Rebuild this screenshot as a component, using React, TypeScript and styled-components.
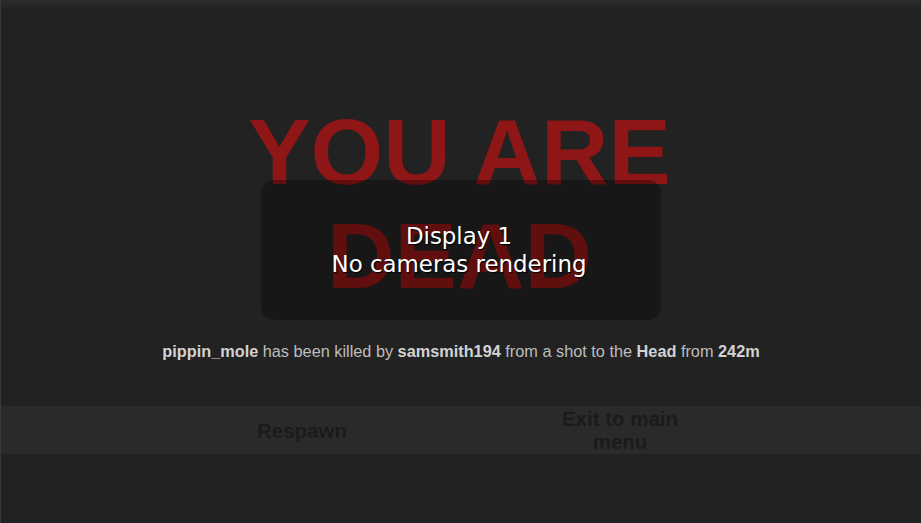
import React from "react";
import styled, { createGlobalStyle } from "styled-components";

const Global = createGlobalStyle`
  html, body { margin: 0; padding: 0; background: #222222; }
  * { box-sizing: border-box; }
`;

const Screen = styled.div`
  position: relative;
  width: 921px;
  height: 523px;
  background: #222222;
  border-left: 1px solid #3a3a3a;
  display: flex;
  flex-direction: column;
  align-items: stretch;
  overflow: hidden;
  font-family: "Liberation Sans", Arial, sans-serif;
`;

const TopStrip = styled.div`
  height: 7px;
  flex: none;
  background: linear-gradient(#2b2b2b, #272727);
  border-bottom: 1px solid #262626;
`;

const Title = styled.h1`
  margin: 93px 0 0;
  font-family: "Liberation Sans", Arial, sans-serif;
  font-weight: 700;
  font-size: 93.5px;
  line-height: 104px;
  color: #8e1616;
  text-align: center;
  padding-right: 3px;
`;

const KillMessage = styled.p`
  margin: 33px 0 0;
  text-align: center;
  font-size: 16.3px;
  line-height: 20px;
  color: #bdbdbd;
`;

const Strong = styled.b`
  font-weight: 700;
  color: #d2d2d2;
`;

const ButtonBar = styled.div`
  margin-top: 45px;
  height: 48px;
  flex: none;
  background: #2a2a2a;
  display: flex;
  justify-content: center;
  align-items: center;
  gap: 178px;
`;

const MenuButton = styled.button`
  width: 140px;
  padding: 0;
  border: none;
  background: transparent;
  color: #1b1b1b;
  font-family: "Liberation Sans", Arial, sans-serif;
  font-weight: 700;
  font-size: 20.5px;
  line-height: 23px;
  text-align: center;
  cursor: pointer;
`;

const NoCameraPanel = styled.div`
  position: absolute;
  left: 260px;
  top: 180px;
  width: 400px;
  height: 140px;
  padding-right: 4px;
  border-radius: 13px;
  background: rgba(0, 0, 0, 0.32);
  display: flex;
  flex-direction: column;
  align-items: center;
  justify-content: center;
  color: #ffffff;
  font-family: "DejaVu Sans", Verdana, sans-serif;
  font-size: 22.9px;
  line-height: 28px;
  text-shadow: 1px 1px 1px #000000;
`;

export default function App() {
  return (
    <>
      <Global />
      <Screen>
        <TopStrip />
        <Title>
          YOU ARE
          <br />
          DEAD
        </Title>
        <KillMessage>
          <Strong>pippin_mole</Strong> has been killed by <Strong>samsmith194</Strong> from a shot to the{" "}
          <Strong>Head</Strong> from <Strong>242m</Strong>
        </KillMessage>
        <ButtonBar>
          <MenuButton>Respawn</MenuButton>
          <MenuButton>Exit to main menu</MenuButton>
        </ButtonBar>
        <NoCameraPanel>
          <div>Display 1</div>
          <div>No cameras rendering</div>
        </NoCameraPanel>
      </Screen>
    </>
  );
}
